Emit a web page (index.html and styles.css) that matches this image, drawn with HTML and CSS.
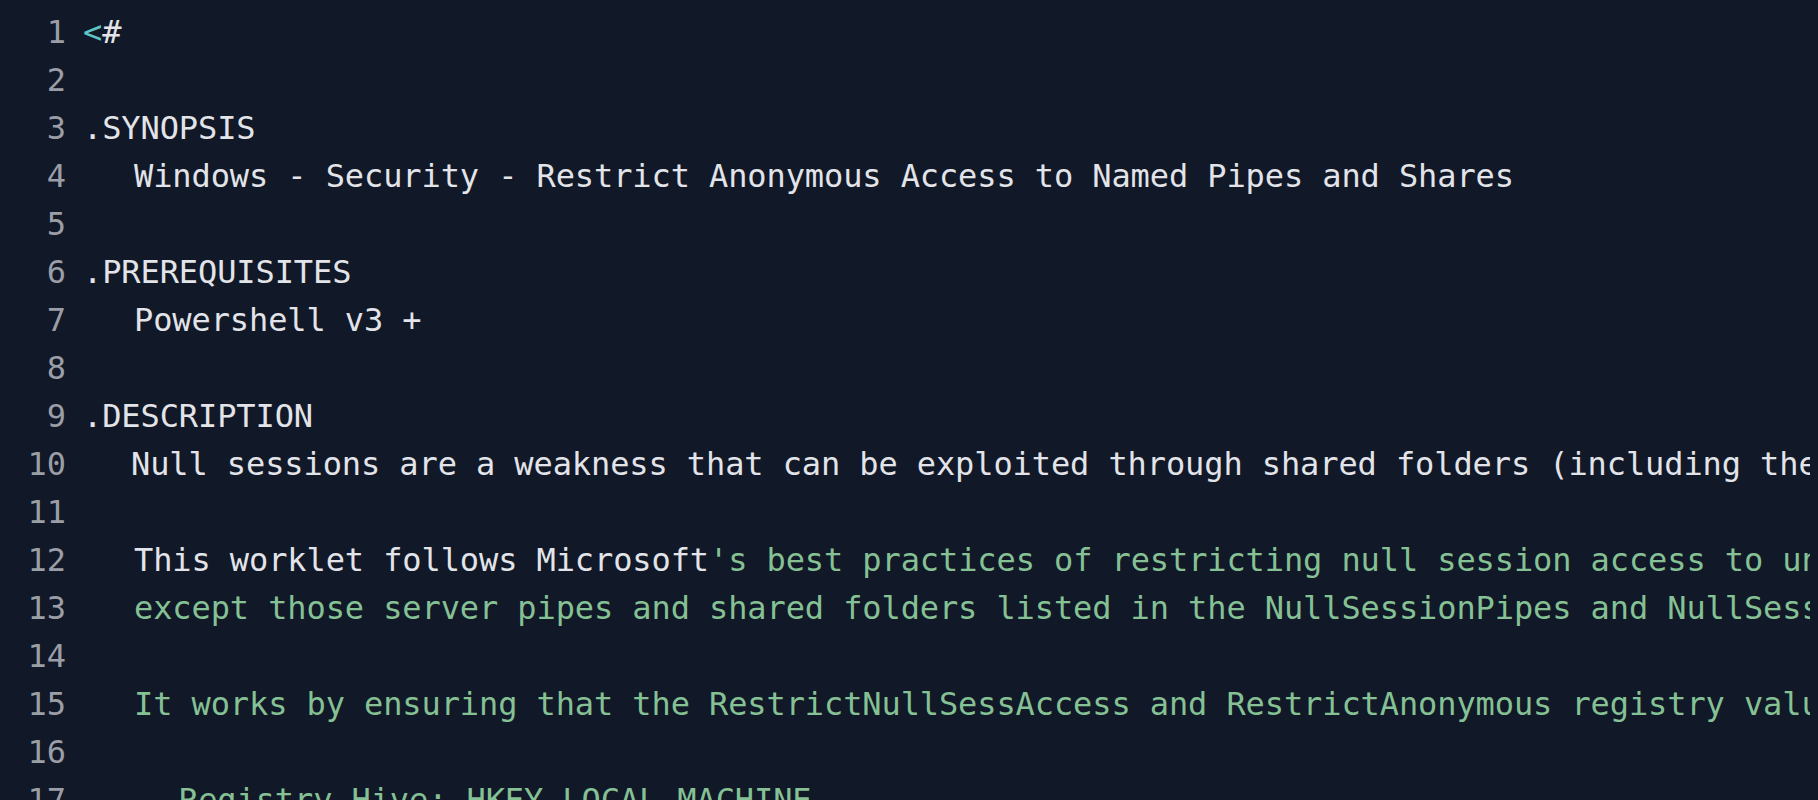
FILE: index.html
```html
<!DOCTYPE html>
<html lang="en">
<head>
<meta charset="utf-8">
<title>Windows - Security - Restrict Anonymous Access</title>
<link rel="stylesheet" href="styles.css">
</head>
<body>
<div class="code">
  <div class="ln">1</div><div class="src"><span class="op">&lt;</span>#</div>
  <div class="ln">2</div><div class="src"></div>
  <div class="ln">3</div><div class="src">.SYNOPSIS</div>
  <div class="ln">4</div><div class="src i1">Windows - Security - Restrict Anonymous Access to Named Pipes and Shares</div>
  <div class="ln">5</div><div class="src"></div>
  <div class="ln">6</div><div class="src">.PREREQUISITES</div>
  <div class="ln">7</div><div class="src i1">Powershell v3 +</div>
  <div class="ln">8</div><div class="src"></div>
  <div class="ln">9</div><div class="src">.DESCRIPTION</div>
  <div class="ln">10</div><div class="src i1 n10">Null sessions are a weakness that can be exploited through shared folders (including the IPC$ share) on the device.</div>
  <div class="ln">11</div><div class="src"></div>
  <div class="ln">12</div><div class="src i1">This worklet follows Microsoft<span class="str">'s best practices of restricting null session access to unnamed pipes and shares,</span></div>
  <div class="ln">13</div><div class="src i1 str">except those server pipes and shared folders listed in the NullSessionPipes and NullSessionShares registry values.</div>
  <div class="ln">14</div><div class="src str"></div>
  <div class="ln">15</div><div class="src i1 str">It works by ensuring that the RestrictNullSessAccess and RestrictAnonymous registry values are set to 1.</div>
  <div class="ln">16</div><div class="src str"></div>
  <div class="ln">17</div><div class="src i2 str">Registry Hive: HKEY_LOCAL_MACHINE</div>
  <div class="ln">18</div><div class="src i2 str">Registry Path: SYSTEM\CurrentControlSet\Services\LanManServer\Parameters</div>
</div>
</body>
</html>
```
FILE: styles.css
```css
html {
  background: #111827;
  overflow: hidden;
}

body {
  margin: 8px;
  background: #111827;
  overflow: hidden;
}

.code {
  display: grid;
  grid-template-columns: 58px 1fr;
  column-gap: 17px;
  font-family: "DejaVu Sans Mono", monospace;
  font-size: 32px;
  line-height: 48px;
  color: #e2e4e9;
}

.ln {
  text-align: right;
  color: #9b9ea6;
}

.src {
  white-space: pre;
  min-height: 48px;
  overflow: hidden;
  letter-spacing: -0.1px;
}

.i1 {
  padding-left: 51px;
}

.n10 {
  padding-left: 48px;
}

.i2 {
  padding-left: 96px;
}

.op {
  color: #5fc4c4;
}

.str {
  color: #85c194;
}
```
